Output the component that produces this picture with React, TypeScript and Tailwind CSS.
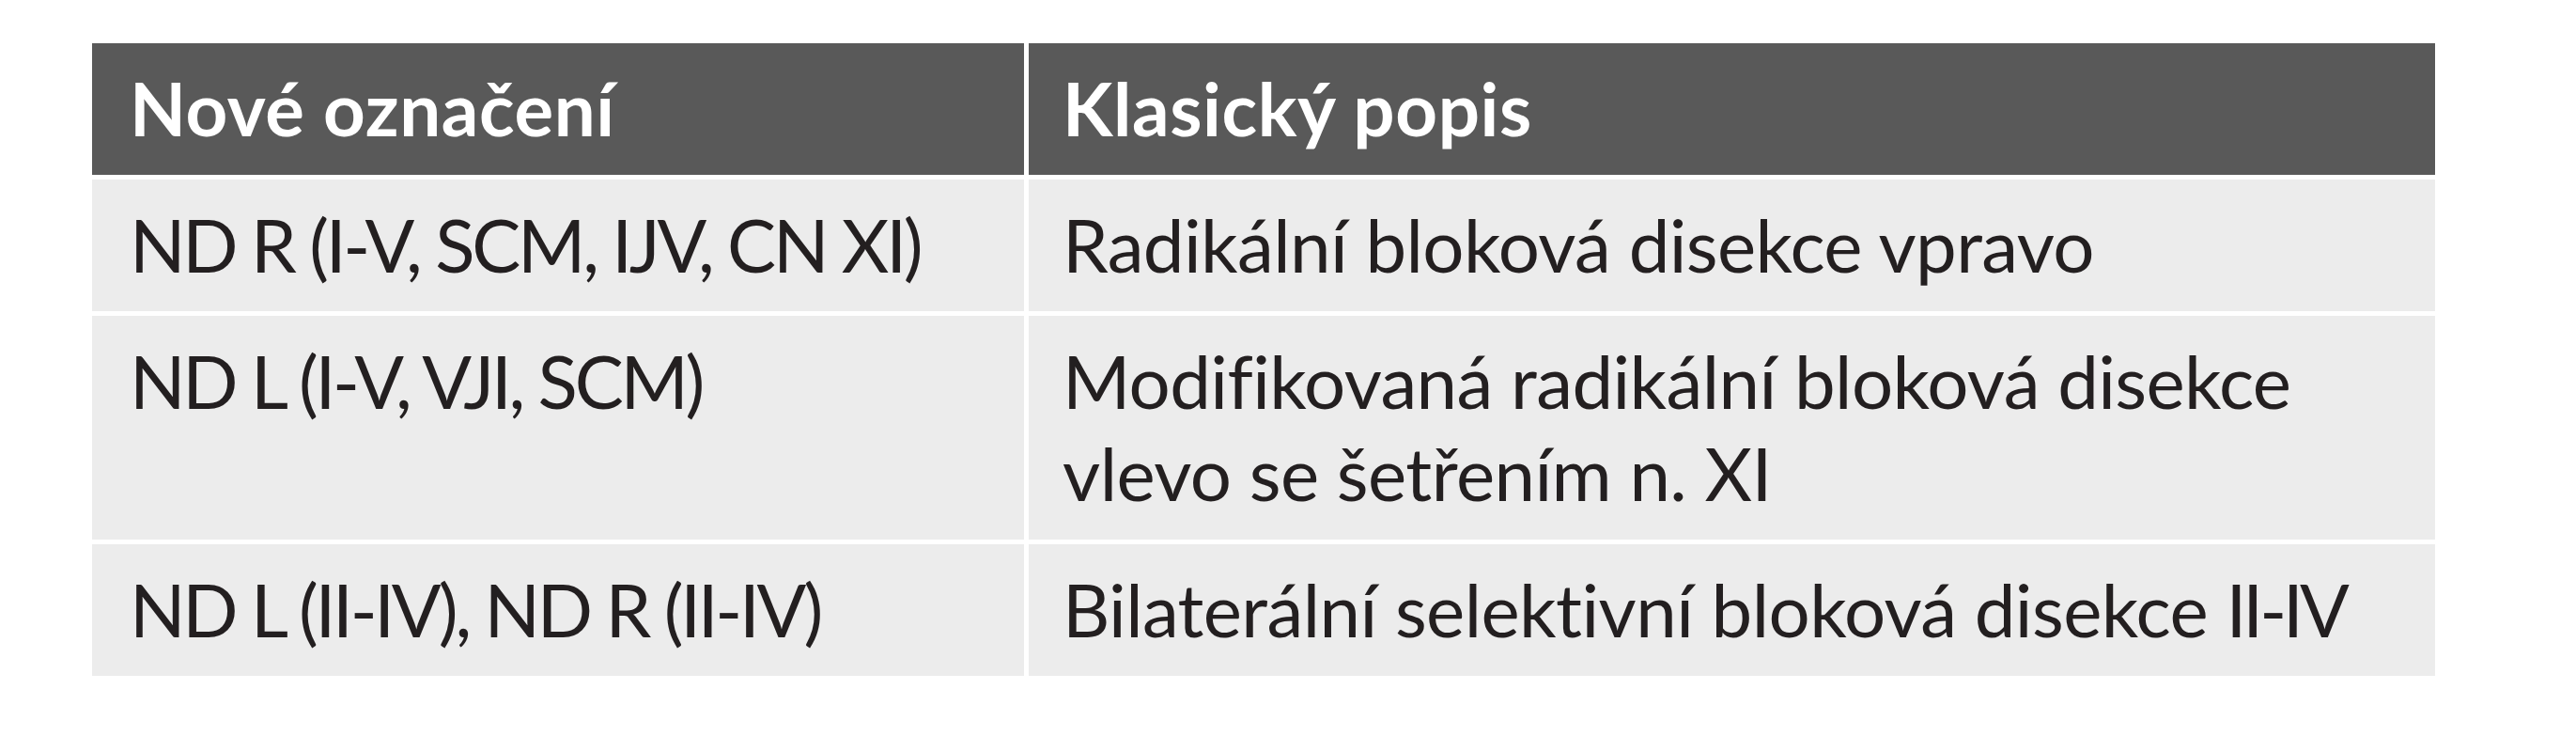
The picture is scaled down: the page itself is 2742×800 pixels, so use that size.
const rows: { code: string; desc: string[] }[] = [
  { code: "ND R (I-V, SCM, IJV, CN XI)", desc: ["Radikální bloková disekce vpravo"] },
  {
    code: "ND L (I-V, VJI, SCM)",
    desc: ["Modifikovaná radikální bloková disekce", "vlevo se šetřením n. XI"],
  },
  { code: "ND L (II-IV), ND R (II-IV)", desc: ["Bilaterální selektivní bloková disekce II-IV"] },
];

export default function App() {
  return (
    <div className="min-h-[800px] w-[2742px] bg-white pl-[98px] pt-[46px] font-['Lato',sans-serif] text-[78px] leading-[98px]">
      <div className="grid w-[2494px] grid-cols-[992px_1497px] gap-[5px]">
        {/* header */}
        <div className="bg-[#595959] pb-[22px] pl-[40px] pt-[20px] font-bold tracking-[0.6px] text-white">
          Nové označení
        </div>
        <div className="bg-[#595959] pb-[22px] pl-[36px] pt-[20px] font-bold tracking-[0.6px] text-white">
          Klasický popis
        </div>

        {rows.map((row, i) => (
          <div key={i} className="contents">
            <div className="bg-[#ececec] pb-[22px] pl-[40px] pt-[20px] tracking-[-3.3px] text-[#231f20]">
              {row.code}
            </div>
            <div className="bg-[#ececec] pb-[22px] pl-[36px] pt-[20px] tracking-[-0.6px] text-[#231f20]">
              {row.desc.map((line, j) =>
                line.endsWith(" II-IV") ? (
                  <div key={j}>
                    {line.slice(0, -5)}
                    <span className="tracking-[-4px]">II-IV</span>
                  </div>
                ) : (
                  <div key={j}>{line}</div>
                ),
              )}
            </div>
          </div>
        ))}
      </div>
    </div>
  );
}
